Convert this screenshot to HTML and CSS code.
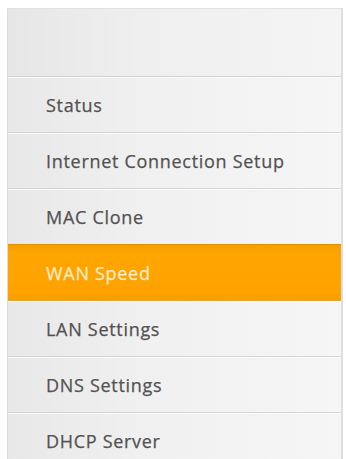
FILE: index.html
```html
<!DOCTYPE html>
<html>
<head>
<meta charset="utf-8">
<link rel="stylesheet" href="styles.css">
</head>
<body>
<nav class="menu">
  <div class="menu-head"></div>
  <a class="item">Status</a>
  <a class="item">Internet Connection Setup</a>
  <a class="item">MAC Clone</a>
  <a class="item active">WAN Speed</a>
  <a class="item">LAN Settings</a>
  <a class="item">DNS Settings</a>
  <a class="item">DHCP Server</a>
</nav>
</body>
</html>
```
FILE: styles.css
```css
html, body {
  margin: 0;
  padding: 0;
  background: #ffffff;
  overflow: hidden;
}
.menu {
  margin: 8px 3px 0 7px;
  border-left: 1px solid #dcdcdc;
  border-right: 2px solid #dedede;
  border-top: 1px solid #e2e2e2;
  display: flex;
  flex-direction: column;
  background: linear-gradient(to right, #e8e8e8 0%, #f0f0f0 40%, #f6f6f6 100%);
  font-family: "Open Sans", "Liberation Sans", sans-serif;
}
.menu-head {
  height: 67px;
  border-bottom: 1px solid #d2d2d2;
  box-shadow: 0 1px 0 #ffffff;
  background: linear-gradient(to right, #e6e6e6 0%, #efefef 40%, #f4f4f4 100%);
}
.item {
  display: flex;
  align-items: center;
  height: 55px;
  padding-left: 38px;
  font-size: 18px;
  letter-spacing: 0.7px;
  color: #525252;
  border-bottom: 1px solid #d4d4d4;
  box-shadow: inset 0 1px 0 #fbfbfb;
  -webkit-text-stroke: 0.25px #525252;
}
.item.active {
  background: linear-gradient(to bottom, #f3a000 0%, #ffa500 15%, #ffa200 85%, #f4a000 100%);
  border-top: 1px solid #e39000;
  margin-top: -1px;
  color: #fbecc8;
  -webkit-text-stroke: 0.25px #fbecc8;
  box-shadow: none;
  border-bottom: 1px solid #e8a53a;
}
```
